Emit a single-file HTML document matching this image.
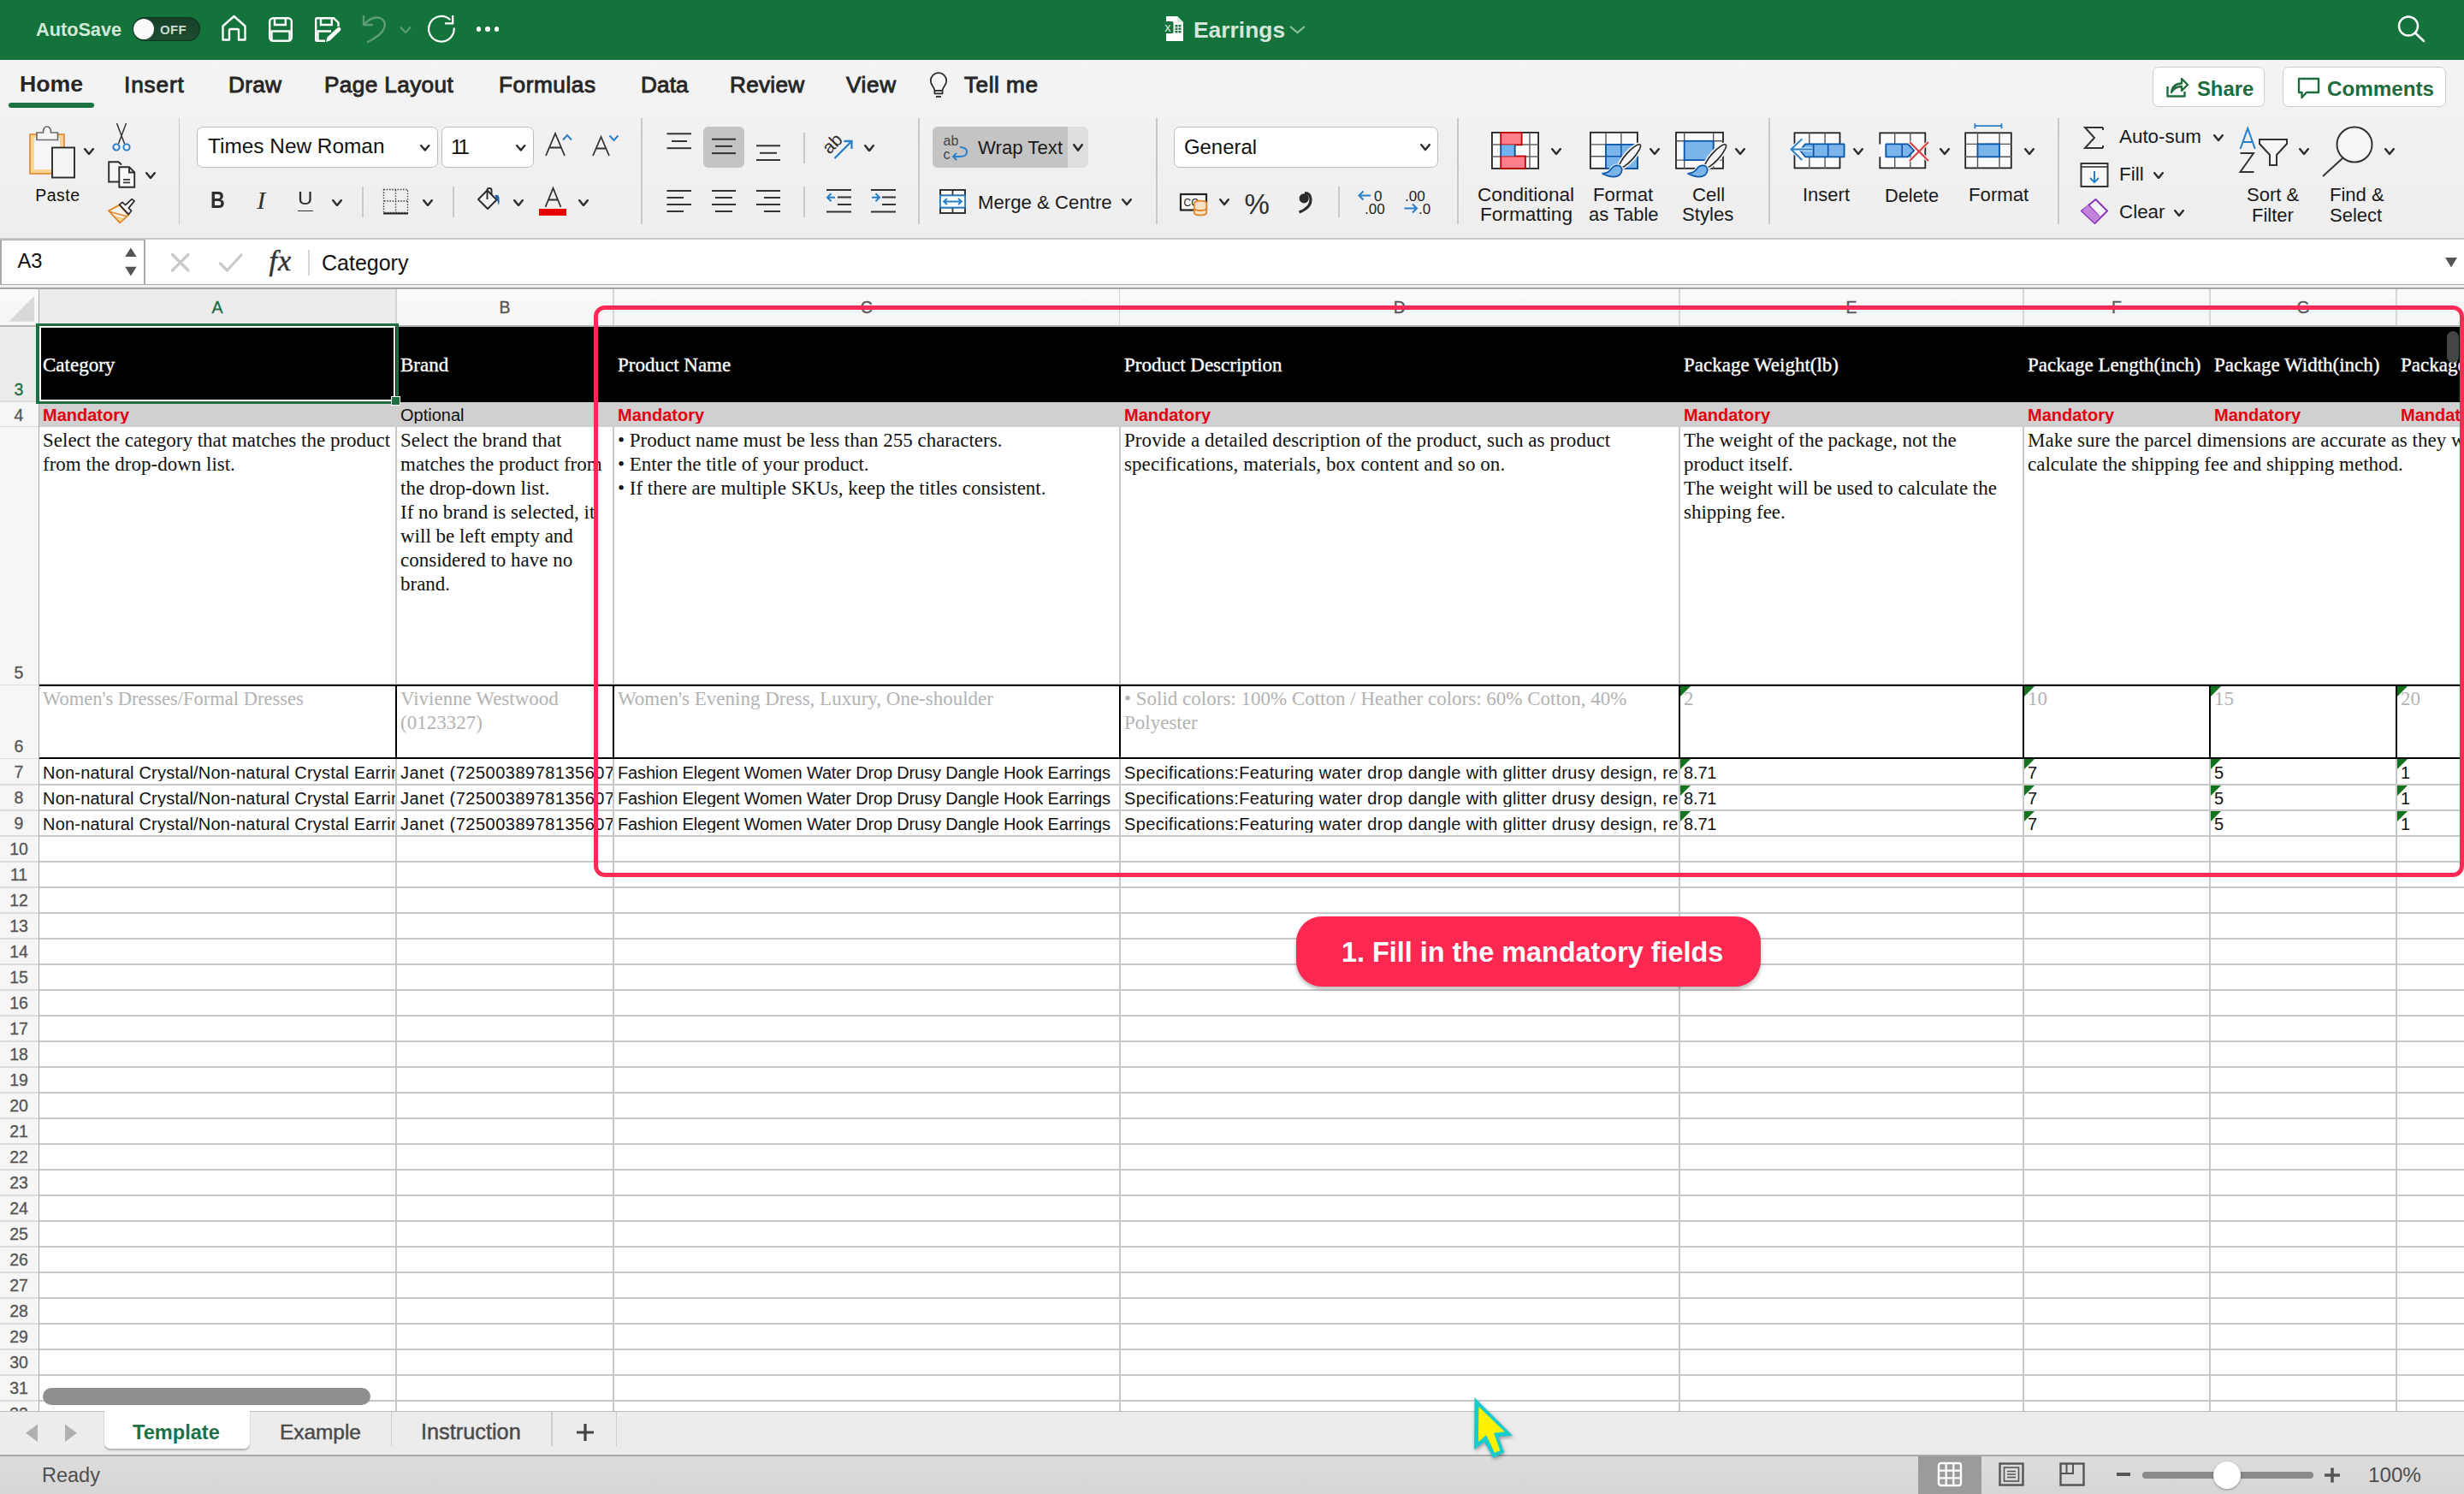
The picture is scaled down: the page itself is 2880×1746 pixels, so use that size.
<!DOCTYPE html><html><head><meta charset="utf-8"><style>
html,body{margin:0;padding:0;}
body{width:2880px;height:1746px;position:relative;overflow:hidden;background:#fff;font-family:"Liberation Sans",sans-serif;}
.t{position:absolute;white-space:pre;}
.r{position:absolute;}
</style></head><body>
<div class="r" style="left:0px;top:0px;width:2880px;height:70px;background:#13733b"></div>
<div class="t" style="left:42.0px;top:23.6px;font-size:21.7px;line-height:21.7px;color:#d3e8d8;font-weight:bold;font-family:'Liberation Sans', sans-serif;">AutoSave</div>
<div class="r" style="left:155px;top:20px;width:79px;height:28px;background:linear-gradient(#163f27,#1d4d31);border-radius:14px;box-shadow:inset 0 0 0 1px #0e3520"></div>
<div class="r" style="left:156px;top:22px;width:24px;height:24px;background:#fafafa;border-radius:50%"></div>
<div class="t" style="left:187.0px;top:27.3px;font-size:15px;line-height:15px;color:#c9dccf;font-weight:bold;font-family:'Liberation Sans', sans-serif;letter-spacing:0.3px">OFF</div>
<svg class="r" style="left:257px;top:16px;" width="34" height="34" viewBox="0 0 34 34"><path d="M3.5,30.5 V14.5 L16.5,3 L29.5,14.5 V30.5 H22 V19.5 Q22,18 20.5,18 H12.5 Q11,18 11,19.5 V30.5 Z" fill="none" stroke="#fff" stroke-width="2.4" stroke-linejoin="round"/></svg>
<svg class="r" style="left:312px;top:18px;" width="32" height="32" viewBox="0 0 32 32"><rect x="3.2" y="3.2" width="25.6" height="26.6" rx="4" fill="none" stroke="#fff" stroke-width="2.4"/><path d="M9,3.2 V11 H21.8 V3.2" fill="none" stroke="#fff" stroke-width="2.4"/><path d="M5.5,29.8 V18.5 H26.5 V29.8" fill="none" stroke="#fff" stroke-width="2.4"/></svg>
<svg class="r" style="left:366px;top:18px;" width="36" height="34" viewBox="0 0 36 34"><path d="M14,29.8 H4.5 Q3.2,29.8 3.2,28.5 V4.5 Q3.2,3.2 4.5,3.2 H24 L29.5,8.5 V13" fill="none" stroke="#fff" stroke-width="2.4" stroke-linejoin="round"/><path d="M9,3.2 V11 H21.8 V3.2" fill="none" stroke="#fff" stroke-width="2.4"/><path d="M5.5,29.8 V18.5 H21" fill="none" stroke="#fff" stroke-width="2.4"/><path d="M15,31 L16.5,25.5 L28.5,14.5 Q30.5,13 32,14.8 Q33.2,16.5 31.6,18 L19.5,29.5 Z" fill="#fff"/></svg>
<svg class="r" style="left:421px;top:15px;" width="34" height="38" viewBox="0 0 34 38"><path d="M4,4 V14 H14" fill="none" stroke="#5e9d76" stroke-width="2.3" stroke-linecap="round" stroke-linejoin="round"/><path d="M4.5,13.5 Q14,3.5 23,6 Q31,9 28,18 Q25,26 9,34" fill="none" stroke="#5e9d76" stroke-width="2.3" stroke-linecap="round"/></svg>
<svg class="r" style="left:466px;top:29px;" width="16" height="12" viewBox="0 0 16 12"><path d="M2,2.5 L8,9 L14,2.5" fill="none" stroke="#5e9d76" stroke-width="2.2"/></svg>
<svg class="r" style="left:497px;top:15px;" width="38" height="38" viewBox="0 0 38 38"><path d="M33.64,17.5 A14.8,14.8 0 1 1 29.37,8.33" fill="none" stroke="#fff" stroke-width="2.2"/><path d="M32.2,3 V12.3 H23" fill="none" stroke="#fff" stroke-width="2.3"/></svg>
<div class="r" style="left:557.1px;top:31.2px;width:5.4px;height:5.4px;background:#fff;border-radius:50%"></div>
<div class="r" style="left:567.3px;top:31.2px;width:5.4px;height:5.4px;background:#fff;border-radius:50%"></div>
<div class="r" style="left:577.5px;top:31.2px;width:5.4px;height:5.4px;background:#fff;border-radius:50%"></div>
<svg class="r" style="left:1356px;top:17px;" width="30" height="34" viewBox="0 0 30 34"><path d="M7,2 H20 L27,9 V31 H7 Z" fill="#fff"/><path d="M20,2 V9 H27" fill="#d9e8dd"/><rect x="2.5" y="8" width="13" height="14" rx="1.5" fill="#18733c"/><text x="9" y="19.5" font-family="Liberation Sans" font-size="11" fill="#fff" text-anchor="middle">X</text><g fill="#18733c"><rect x="17.5" y="12" width="3" height="2.4"/><rect x="21.5" y="12" width="3" height="2.4"/><rect x="17.5" y="15.5" width="3" height="2.4"/><rect x="21.5" y="15.5" width="3" height="2.4"/><rect x="17.5" y="19" width="3" height="2.4"/><rect x="21.5" y="19" width="3" height="2.4"/></g></svg>
<div class="t" style="left:1395.0px;top:22.1px;font-size:26.4px;line-height:26.4px;color:#d4e7da;font-weight:bold;font-family:'Liberation Sans', sans-serif;">Earrings</div>
<svg class="r" style="left:1505px;top:28px;" width="24" height="14" viewBox="0 0 24 14"><path d="M3,3 L11.5,10 L20,3" fill="none" stroke="#8dbb9c" stroke-width="2.2"/></svg>
<svg class="r" style="left:2800px;top:16px;" width="40" height="38" viewBox="0 0 40 38"><circle cx="15" cy="14.5" r="11" fill="none" stroke="#fff" stroke-width="2.4"/><path d="M23,22.5 L33,32" stroke="#fff" stroke-width="2.6" stroke-linecap="round"/></svg>
<div class="r" style="left:0px;top:70px;width:2880px;height:209px;background:linear-gradient(#f4f4f4,#f1f1f1 40%,#eeeeee)"></div>
<div class="r" style="left:0px;top:278px;width:2880px;height:2px;background:#c9c9c9"></div>
<div class="t" style="left:23.0px;top:85.4px;font-size:26.7px;line-height:26.7px;color:#262626;font-weight:bold;font-family:'Liberation Sans', sans-serif;">Home</div>
<div class="r" style="left:10px;top:120px;width:100px;height:6px;background:#1d7244;border-radius:3px"></div>
<div class="t" style="left:145.0px;top:85.8px;font-size:26.2px;line-height:26.2px;color:#262626;font-weight:normal;font-family:'Liberation Sans', sans-serif;-webkit-text-stroke:0.9px #262626;letter-spacing:0.85px">Insert</div>
<div class="t" style="left:267.0px;top:85.8px;font-size:26.2px;line-height:26.2px;color:#262626;font-weight:normal;font-family:'Liberation Sans', sans-serif;-webkit-text-stroke:0.9px #262626;letter-spacing:0.3px">Draw</div>
<div class="t" style="left:379.0px;top:85.8px;font-size:26.2px;line-height:26.2px;color:#262626;font-weight:normal;font-family:'Liberation Sans', sans-serif;-webkit-text-stroke:0.9px #262626;letter-spacing:0.37px">Page Layout</div>
<div class="t" style="left:583.0px;top:85.8px;font-size:26.2px;line-height:26.2px;color:#262626;font-weight:normal;font-family:'Liberation Sans', sans-serif;-webkit-text-stroke:0.9px #262626;letter-spacing:0.55px">Formulas</div>
<div class="t" style="left:749.0px;top:85.8px;font-size:26.2px;line-height:26.2px;color:#262626;font-weight:normal;font-family:'Liberation Sans', sans-serif;-webkit-text-stroke:0.9px #262626;letter-spacing:0.1px">Data</div>
<div class="t" style="left:853.0px;top:85.8px;font-size:26.2px;line-height:26.2px;color:#262626;font-weight:normal;font-family:'Liberation Sans', sans-serif;-webkit-text-stroke:0.9px #262626;letter-spacing:0.25px">Review</div>
<div class="t" style="left:989.0px;top:85.8px;font-size:26.2px;line-height:26.2px;color:#262626;font-weight:normal;font-family:'Liberation Sans', sans-serif;-webkit-text-stroke:0.9px #262626;letter-spacing:0.6px">View</div>
<div class="t" style="left:1127.0px;top:85.8px;font-size:26.2px;line-height:26.2px;color:#262626;font-weight:normal;font-family:'Liberation Sans', sans-serif;-webkit-text-stroke:0.9px #262626;letter-spacing:0.5px">Tell me</div>
<svg class="r" style="left:1080px;top:78px;" width="34" height="40" viewBox="0 0 34 40"><path d="M12.4,27.6 Q12.0,25.0 10.3,23.0 Q7.8,20.0 7.8,16.3 A9.2,9.2 0 1 1 26.2,16.3 Q26.2,20.0 23.7,23.0 Q22.0,25.0 21.6,27.6 V31.3 H12.4 Z M12.4,27.8 H21.6" fill="#f6f6f6" stroke="#262626" stroke-width="1.7" stroke-linejoin="round"/><path d="M14.0,35.0 H20.0" stroke="#262626" stroke-width="1.8"/></svg>
<div class="r" style="left:2516px;top:78px;width:131px;height:47px;background:#fff;border:1.5px solid #cdcdcd;border-radius:7px;box-sizing:border-box"></div>
<div class="r" style="left:2668px;top:78px;width:191px;height:47px;background:#fff;border:1.5px solid #cdcdcd;border-radius:7px;box-sizing:border-box"></div>
<svg class="r" style="left:2530px;top:88px;" width="30" height="28" viewBox="0 0 30 28"><path d="M3.5,13 V24.5 H23.5 V19" fill="none" stroke="#1f6b3d" stroke-width="2.4" stroke-linejoin="round"/><path d="M8,20 Q9,10 20,9.5 V4 L27,11 L20,18 V13 Q12,13 8,20 Z" fill="none" stroke="#1f6b3d" stroke-width="2.3" stroke-linejoin="round"/></svg>
<svg class="r" style="left:2684px;top:89px;" width="30" height="28" viewBox="0 0 30 28"><path d="M3,3 H26 V19 H12 L6.5,25 V19 H3 Z" fill="none" stroke="#1f6b3d" stroke-width="2.4" stroke-linejoin="round"/></svg>
<div class="t" style="left:2568.0px;top:91.9px;font-size:23.8px;line-height:23.8px;color:#1f6b3d;font-weight:bold;font-family:'Liberation Sans', sans-serif;">Share</div>
<div class="t" style="left:2720.0px;top:91.5px;font-size:24.2px;line-height:24.2px;color:#1f6b3d;font-weight:bold;font-family:'Liberation Sans', sans-serif;">Comments</div>
<svg class="r" style="left:30px;top:144px;" width="62" height="68" viewBox="0 0 62 68"><rect x="5" y="13" width="40" height="46" fill="#fdd592" stroke="#e0862a" stroke-width="1.6"/>
<rect x="10" y="17" width="30" height="37" fill="#f6f6f8"/>
<path d="M13,19.5 V11 H20.5 Q20.5,4 25,4 Q29.5,4 29.5,11 H37.5 V19.5 Z" fill="#f6f6f6" stroke="#6b6b6b" stroke-width="1.7"/>
<rect x="31" y="28.5" width="26" height="35" fill="#f5f5f7" stroke="#2b2b2b" stroke-width="1.9"/></svg>
<svg class="r" style="left:98px;top:172.7px;" width="12" height="8.3" viewBox="0 0 12 8.3"><path d="M1.25,1.25 L6.0,7.050000000000001 L10.75,1.25" fill="none" stroke="#2e2e2e" stroke-width="2.5" stroke-linecap="round" stroke-linejoin="round"/></svg>
<div class="t" style="left:41.2px;top:219.0px;font-size:19.5px;line-height:19.5px;color:#111;font-weight:normal;font-family:'Liberation Sans', sans-serif;letter-spacing:0.5px">Paste</div>
<svg class="r" style="left:128px;top:141px;" width="28" height="38" viewBox="0 0 28 38"><path d="M8.5,3 L17.5,27 M19.5,3 L10.5,27" stroke="#333" stroke-width="1.5"/>
<circle cx="8" cy="31" r="3.6" fill="#e8f3fc" stroke="#2178c4" stroke-width="1.9"/><circle cx="20" cy="31" r="3.6" fill="#e8f3fc" stroke="#2178c4" stroke-width="1.9"/></svg>
<svg class="r" style="left:124px;top:186px;" width="38" height="36" viewBox="0 0 38 36"><path d="M15,26.5 H3.2 V3.2 H14.5 L18,6.5" fill="#f5f5f5" stroke="#2b2b2b" stroke-width="1.9"/>
<path d="M15.3,9.2 H27 L33.2,15.5 V32.8 H15.3 Z" fill="#f8f8f8" stroke="#2b2b2b" stroke-width="1.9"/><path d="M27,9.2 V15.5 H33.2" fill="none" stroke="#2b2b2b" stroke-width="1.9"/>
<path d="M20,23.8 H28 M20,27.3 H28" stroke="#3a3a3a" stroke-width="1.7"/></svg>
<svg class="r" style="left:170.1px;top:200.9px;" width="12" height="8.3" viewBox="0 0 12 8.3"><path d="M1.25,1.25 L6.0,7.050000000000001 L10.75,1.25" fill="none" stroke="#2e2e2e" stroke-width="2.5" stroke-linecap="round" stroke-linejoin="round"/></svg>
<svg class="r" style="left:122px;top:226px;" width="40" height="40" viewBox="0 0 40 40"><polygon points="17.4,13.6 5.0,20.3 18.2,34.3 28.1,25.2" fill="#f7f3ef" stroke="#e0862a" stroke-width="1.9" stroke-linejoin="round"/><polygon points="12.6,26.2 22.8,29.0 18.5,33.2" fill="#fad27e"/><path d="M6.5,21.5 L27,27" stroke="#e0862a" stroke-width="1.8"/><polygon points="17.6,13.1 20.9,10.4 24.6,13.6 32.1,6.6 35.1,8.9 28.3,17.1 31.6,20.3 28.4,24.6" fill="#fbfbfb" stroke="#2b2b2b" stroke-width="1.7" stroke-linejoin="round"/></svg>
<div class="r" style="left:208.5px;top:138px;width:1.5px;height:124px;background:#c9c9c9"></div>
<div class="r" style="left:230px;top:148px;width:282px;height:48px;background:#fff;border:1.5px solid #bdbdbd;border-radius:7px;box-sizing:border-box"></div>
<div class="t" style="left:243.0px;top:159.3px;font-size:24.4px;line-height:24.4px;color:#111;font-weight:normal;font-family:'Liberation Sans', sans-serif;">Times New Roman</div>
<svg class="r" style="left:491px;top:169.3px;" width="11.5" height="7.8" viewBox="0 0 11.5 7.8"><path d="M1.25,1.25 L5.75,6.55 L10.25,1.25" fill="none" stroke="#2e2e2e" stroke-width="2.5" stroke-linecap="round" stroke-linejoin="round"/></svg>
<div class="r" style="left:516px;top:148px;width:108px;height:48px;background:#fff;border:1.5px solid #bdbdbd;border-radius:7px;box-sizing:border-box"></div>
<div class="t" style="left:527.0px;top:159.7px;font-size:24px;line-height:24px;color:#111;font-weight:normal;font-family:'Liberation Sans', sans-serif;letter-spacing:-3px">11</div>
<svg class="r" style="left:603px;top:169.2px;" width="11.5" height="7.8" viewBox="0 0 11.5 7.8"><path d="M1.25,1.25 L5.75,6.55 L10.25,1.25" fill="none" stroke="#2e2e2e" stroke-width="2.5" stroke-linecap="round" stroke-linejoin="round"/></svg>
<svg class="r" style="left:634px;top:152px;" width="40" height="34" viewBox="0 0 40 34"><path d="M4,30 L15,4 L26,30 M8.2,20.5 H21.8" fill="none" stroke="#333" stroke-width="1.8"/><path d="M24,11.5 L29,6 L34,11.5" fill="none" stroke="#2a7fc9" stroke-width="2"/></svg>
<svg class="r" style="left:689px;top:152px;" width="40" height="34" viewBox="0 0 40 34"><path d="M4,30 L13.5,8 L23,30 M7.8,21.5 H19.2" fill="none" stroke="#333" stroke-width="1.8"/><path d="M23.5,6.5 L28.5,12 L33.5,6.5" fill="none" stroke="#2a7fc9" stroke-width="2"/></svg>
<div class="t" style="left:246.0px;top:220.4px;font-size:28px;line-height:28px;color:#2e2e2e;font-weight:bold;font-family:'Liberation Sans', sans-serif;transform:scaleX(0.83);transform-origin:0 0">B</div>
<div class="t" style="left:300.2px;top:218.7px;font-size:30px;line-height:30px;color:#2e2e2e;font-weight:normal;font-family:'Liberation Sans', sans-serif;font-family:'Liberation Serif', serif;font-style:italic">I</div>
<div class="t" style="left:348.3px;top:221.4px;font-size:22.5px;line-height:22.5px;color:#2e2e2e;font-weight:normal;font-family:'Liberation Sans', sans-serif;transform:scaleX(1.08);transform-origin:0 0">U</div>
<div class="r" style="left:348.1px;top:245.6px;width:17.9px;height:1.9px;background:#2e2e2e"></div>
<svg class="r" style="left:388px;top:232.7px;" width="12" height="8.3" viewBox="0 0 12 8.3"><path d="M1.25,1.25 L6.0,7.050000000000001 L10.75,1.25" fill="none" stroke="#2e2e2e" stroke-width="2.5" stroke-linecap="round" stroke-linejoin="round"/></svg>
<div class="r" style="left:423px;top:218px;width:1.5px;height:36px;background:#c9c9c9"></div>
<svg class="r" style="left:446px;top:219px;" width="34" height="34" viewBox="0 0 34 34"><rect x="2.5" y="2.5" width="28" height="27" fill="none" stroke="#444" stroke-width="1.3" stroke-dasharray="1.6 1.6"/>
<path d="M16.5,3 V29 M3,16 H30" stroke="#444" stroke-width="1.3" stroke-dasharray="1.6 1.6"/><path d="M2,30.5 H31" stroke="#222" stroke-width="2"/></svg>
<svg class="r" style="left:494px;top:232.7px;" width="12" height="8.3" viewBox="0 0 12 8.3"><path d="M1.25,1.25 L6.0,7.050000000000001 L10.75,1.25" fill="none" stroke="#2e2e2e" stroke-width="2.5" stroke-linecap="round" stroke-linejoin="round"/></svg>
<div class="r" style="left:529px;top:218px;width:1.5px;height:36px;background:#c9c9c9"></div>
<svg class="r" style="left:556px;top:217px;" width="32" height="30" viewBox="0 0 32 30"><path d="M3,16 L13.5,5.5 L24.5,16.5 L14,27 Z" fill="#f6f6f6" stroke="#2b2b2b" stroke-width="1.9" stroke-linejoin="round"/>
<path d="M13.5,16 V5 Q13.5,3 16,3 Q18.5,3 18.5,5 V10" fill="none" stroke="#2b2b2b" stroke-width="1.9"/>
<path d="M22.5,11 Q27,9.5 27.5,14.5 Q28,18.5 27,23 Q26,18 23.5,14.5 Z" fill="#1f5fa8"/></svg>
<svg class="r" style="left:600px;top:232.7px;" width="12" height="8.3" viewBox="0 0 12 8.3"><path d="M1.25,1.25 L6.0,7.050000000000001 L10.75,1.25" fill="none" stroke="#2e2e2e" stroke-width="2.5" stroke-linecap="round" stroke-linejoin="round"/></svg>
<svg class="r" style="left:632px;top:217px;" width="30" height="28" viewBox="0 0 30 28"><path d="M5.5,25 L14.5,3 L23.5,25 M9,16.5 H20" fill="none" stroke="#333" stroke-width="1.8"/></svg>
<div class="r" style="left:630px;top:244px;width:32px;height:8px;background:#e60000"></div>
<svg class="r" style="left:675.8px;top:232.7px;" width="12" height="8.3" viewBox="0 0 12 8.3"><path d="M1.25,1.25 L6.0,7.050000000000001 L10.75,1.25" fill="none" stroke="#2e2e2e" stroke-width="2.5" stroke-linecap="round" stroke-linejoin="round"/></svg>
<div class="r" style="left:749px;top:138px;width:1.5px;height:124px;background:#c9c9c9"></div>
<div class="r" style="left:822px;top:148px;width:48px;height:48px;background:#c4c4c4;border-radius:6px"></div>
<svg class="r" style="left:770px;top:150px;" width="160" height="110" viewBox="0 0 160 110"><path d="M9.5,6.300000000000011 H38" stroke="#333" stroke-width="2"/><path d="M15,15 H33" stroke="#333" stroke-width="2"/><path d="M9.5,23.19999999999999 H38" stroke="#333" stroke-width="2"/></svg>
<svg class="r" style="left:770px;top:150px;" width="160" height="110" viewBox="0 0 160 110"><path d="M62,12.699999999999989 H90" stroke="#333" stroke-width="2"/><path d="M66,20.900000000000006 H86" stroke="#333" stroke-width="2"/><path d="M62,29.099999999999994 H90" stroke="#333" stroke-width="2"/></svg>
<svg class="r" style="left:770px;top:150px;" width="160" height="110" viewBox="0 0 160 110"><path d="M114,20.30000000000001 H142" stroke="#333" stroke-width="2"/><path d="M118,28.80000000000001 H138" stroke="#333" stroke-width="2"/><path d="M114,37 H142" stroke="#333" stroke-width="2"/></svg>
<svg class="r" style="left:770px;top:150px;" width="160" height="110" viewBox="0 0 160 110"><path d="M9.5,73 H38" stroke="#333" stroke-width="2"/><path d="M9.5,81 H29" stroke="#333" stroke-width="2"/><path d="M9.5,89 H38" stroke="#333" stroke-width="2"/><path d="M9.5,97 H29" stroke="#333" stroke-width="2"/></svg>
<svg class="r" style="left:770px;top:150px;" width="160" height="110" viewBox="0 0 160 110"><path d="M62,73 H90" stroke="#333" stroke-width="2"/><path d="M66,81 H86" stroke="#333" stroke-width="2"/><path d="M62,89 H90" stroke="#333" stroke-width="2"/><path d="M66,97 H86" stroke="#333" stroke-width="2"/></svg>
<svg class="r" style="left:770px;top:150px;" width="160" height="110" viewBox="0 0 160 110"><path d="M114,73 H142" stroke="#333" stroke-width="2"/><path d="M123,81 H142" stroke="#333" stroke-width="2"/><path d="M114,89 H142" stroke="#333" stroke-width="2"/><path d="M123,97 H142" stroke="#333" stroke-width="2"/></svg>
<div class="r" style="left:939px;top:155px;width:1.5px;height:36px;background:#c9c9c9"></div>
<div class="r" style="left:939px;top:218px;width:1.5px;height:36px;background:#c9c9c9"></div>
<svg class="r" style="left:958px;top:150px;" width="44" height="42" viewBox="0 0 44 42"><text x="0" y="0" transform="translate(11.5,31) rotate(-45)" font-family="Liberation Sans" font-size="21" fill="#2b2b2b">ab</text>
<path d="M17.5,35 L36.5,16 M28.5,15 H37.5 V24" fill="none" stroke="#2a7fc9" stroke-width="2.3"/></svg>
<svg class="r" style="left:1010.1px;top:168.6px;" width="12" height="8.4" viewBox="0 0 12 8.4"><path d="M1.25,1.25 L6.0,7.15 L10.75,1.25" fill="none" stroke="#2e2e2e" stroke-width="2.5" stroke-linecap="round" stroke-linejoin="round"/></svg>
<svg class="r" style="left:962px;top:218px;" width="90" height="34" viewBox="0 0 90 34"><path d="M4,4 H33 M17,12.5 H33 M17,21 H33 M4,29.5 H33" stroke="#333" stroke-width="2"/>
<path d="M14,12.8 H5 M9.5,8.3 L5,12.8 L9.5,17.3" fill="none" stroke="#2a7fc9" stroke-width="2"/>
<path d="M56,4 H85 M69,12.5 H85 M69,21 H85 M56,29.5 H85" stroke="#333" stroke-width="2"/>
<path d="M57,12.8 H66 M61.5,8.3 L66,12.8 L61.5,17.3" fill="none" stroke="#2a7fc9" stroke-width="2"/></svg>
<div class="r" style="left:1073px;top:138px;width:1.5px;height:124px;background:#c9c9c9"></div>
<div class="r" style="left:1090px;top:148px;width:182px;height:48px;background:#dedede;border-radius:6px"></div>
<div class="r" style="left:1090px;top:148px;width:158px;height:48px;background:#c4c4c4;border-radius:6px 0 0 6px"></div>
<svg class="r" style="left:1100px;top:155px;" width="36" height="36" viewBox="0 0 36 36"><text x="2.5" y="15" font-family="Liberation Sans" font-size="16" fill="#444">ab</text><text x="2.5" y="31" font-family="Liberation Sans" font-size="16" fill="#444">c</text>
<path d="M22,17 Q30,17 30,22.5 Q30,28 22,28 H14 M18,24 L14,28 L18,32" fill="none" stroke="#2a7fc9" stroke-width="2"/></svg>
<div class="t" style="left:1143.0px;top:161.9px;font-size:22.2px;line-height:22.2px;color:#1a1a1a;font-weight:normal;font-family:'Liberation Sans', sans-serif;">Wrap Text</div>
<svg class="r" style="left:1254px;top:167.8px;" width="12" height="9" viewBox="0 0 12 9"><path d="M1.25,1.25 L6.0,7.75 L10.75,1.25" fill="none" stroke="#2e2e2e" stroke-width="2.5" stroke-linecap="round" stroke-linejoin="round"/></svg>
<svg class="r" style="left:1096px;top:219px;" width="36" height="34" viewBox="0 0 36 34"><rect x="3" y="3" width="29" height="27" fill="#fff" stroke="#333" stroke-width="2"/>
<path d="M3,9.5 H32 M3,23.5 H32 M17.5,3 V9.5 M17.5,23.5 V30" stroke="#333" stroke-width="1.8"/>
<rect x="3" y="9.5" width="29" height="14" fill="#fff" stroke="#2a7fc9" stroke-width="1.8"/>
<path d="M7,16.5 H28 M11,13 L7,16.5 L11,20 M24,13 L28,16.5 L24,20" fill="none" stroke="#2a7fc9" stroke-width="1.8"/></svg>
<div class="t" style="left:1143.0px;top:225.7px;font-size:22.2px;line-height:22.2px;color:#1a1a1a;font-weight:normal;font-family:'Liberation Sans', sans-serif;">Merge &amp; Centre</div>
<svg class="r" style="left:1311px;top:232.3px;" width="12" height="8.3" viewBox="0 0 12 8.3"><path d="M1.25,1.25 L6.0,7.050000000000001 L10.75,1.25" fill="none" stroke="#2e2e2e" stroke-width="2.5" stroke-linecap="round" stroke-linejoin="round"/></svg>
<div class="r" style="left:1351px;top:138px;width:1.5px;height:124px;background:#c9c9c9"></div>
<div class="r" style="left:1372px;top:148px;width:309px;height:48px;background:#fff;border:1.5px solid #bdbdbd;border-radius:7px;box-sizing:border-box"></div>
<div class="t" style="left:1384.0px;top:159.8px;font-size:23.9px;line-height:23.9px;color:#111;font-weight:normal;font-family:'Liberation Sans', sans-serif;">General</div>
<svg class="r" style="left:1660px;top:168.3px;" width="12" height="8.3" viewBox="0 0 12 8.3"><path d="M1.25,1.25 L6.0,7.050000000000001 L10.75,1.25" fill="none" stroke="#2e2e2e" stroke-width="2.5" stroke-linecap="round" stroke-linejoin="round"/></svg>
<svg class="r" style="left:1376px;top:222px;" width="42" height="32" viewBox="0 0 42 32"><rect x="4" y="5" width="30" height="18.5" fill="#f7f7f7" stroke="#222" stroke-width="2.2"/>
<text x="7.5" y="18.5" font-family="Liberation Sans" font-size="12" fill="#222">CC</text>
<ellipse cx="27" cy="15.5" rx="7.2" ry="2.9" fill="#fbe3c8" stroke="#e0862a" stroke-width="1.8"/><path d="M19.8,15.5 V26.5 Q19.8,29.5 27,29.5 Q34.2,29.5 34.2,26.5 V15.5 M19.8,21 Q19.8,24 27,24 Q34.2,24 34.2,21" fill="#fbe3c8" stroke="#e0862a" stroke-width="1.8"/></svg>
<svg class="r" style="left:1425.3px;top:232.3px;" width="12" height="8.3" viewBox="0 0 12 8.3"><path d="M1.25,1.25 L6.0,7.050000000000001 L10.75,1.25" fill="none" stroke="#2e2e2e" stroke-width="2.5" stroke-linecap="round" stroke-linejoin="round"/></svg>
<div class="t" style="left:1454.5px;top:221.7px;font-size:33px;line-height:33px;color:#2e2e2e;font-weight:normal;font-family:'Liberation Sans', sans-serif;">%</div>
<svg class="r" style="left:1512px;top:222px;" width="24" height="30" viewBox="0 0 24 30"><path d="M13,3.5 Q20,3.5 20,11.5 Q20,21 6.5,26" fill="none" stroke="#2b2b2b" stroke-width="3.2"/><circle cx="12.2" cy="9.8" r="5.6" fill="#2b2b2b"/></svg>
<div class="r" style="left:1564px;top:218px;width:1.5px;height:36px;background:#c9c9c9"></div>
<svg class="r" style="left:1585px;top:219px;" width="40" height="34" viewBox="0 0 40 34"><path d="M17,9.5 H3.5 M8.5,4.5 L3.5,9.5 L8.5,14.5" fill="none" stroke="#2a7fc9" stroke-width="2"/>
<text x="21" y="16" font-family="Liberation Sans" font-size="17" fill="#222">0</text><text x="10" y="31" font-family="Liberation Sans" font-size="17" fill="#222">.00</text></svg>
<svg class="r" style="left:1638px;top:219px;" width="40" height="34" viewBox="0 0 40 34"><text x="4" y="16" font-family="Liberation Sans" font-size="17" fill="#222">.00</text><text x="20" y="31" font-family="Liberation Sans" font-size="17" fill="#222">.0</text>
<path d="M3.5,24.5 H18 M13,19.5 L18,24.5 L13,29.5" fill="none" stroke="#2a7fc9" stroke-width="2"/></svg>
<div class="r" style="left:1703px;top:138px;width:1.5px;height:124px;background:#c9c9c9"></div>
<svg class="r" style="left:1735px;top:145px;" width="70" height="60" viewBox="0 0 70 60"><rect x="8.9" y="9.9" width="54.2" height="42" fill="#fafafa" stroke="#222" stroke-width="1.8"/>
<path d="M9,24 H63 M9,38 H63 M53,10 V52" stroke="#666" stroke-width="1.5"/>
<rect x="19.2" y="10" width="24.4" height="14.3" fill="#ff7f8c" stroke="#c00000" stroke-width="1.8"/>
<rect x="19.2" y="37.5" width="28.7" height="14.3" fill="#ff7f8c" stroke="#c00000" stroke-width="1.8"/>
<rect x="19.2" y="24.3" width="16.5" height="13.2" fill="#72b2ee"/><path d="M19.2,24.3 V37.5 M35.7,24.3 V37.5" stroke="#0b4a8c" stroke-width="1.8"/></svg>
<svg class="r" style="left:1813.4px;top:172.6px;" width="12" height="8.3" viewBox="0 0 12 8.3"><path d="M1.25,1.25 L6.0,7.050000000000001 L10.75,1.25" fill="none" stroke="#2e2e2e" stroke-width="2.5" stroke-linecap="round" stroke-linejoin="round"/></svg>
<div class="t" style="left:1727.0px;top:216.9px;font-size:22.6px;line-height:22.6px;color:#1a1a1a;font-weight:normal;font-family:'Liberation Sans', sans-serif;">Conditional</div>
<div class="t" style="left:1730.0px;top:239.9px;font-size:22.6px;line-height:22.6px;color:#1a1a1a;font-weight:normal;font-family:'Liberation Sans', sans-serif;">Formatting</div>
<svg class="r" style="left:1850px;top:140px;" width="80" height="75" viewBox="0 0 80 75"><rect x="8.9" y="14.8" width="55" height="42" fill="#fafafa" stroke="#222" stroke-width="1.8"/>
<path d="M9,28.9 H64 M9,42.7 H64 M27,15 V57 M44.9,15 V57" stroke="#555" stroke-width="1.4"/>
<rect x="27" y="28.9" width="36.9" height="28" fill="#7ab4ea" stroke="#0a55a8" stroke-width="1.8"/><path d="M27,42.7 H64 M44.9,29 V57" stroke="#0a55a8" stroke-width="1.5"/>
<ellipse cx="55" cy="42.5" rx="18" ry="4.6" transform="rotate(-48 55 42.5)" fill="#f4f4f4" stroke="#f0f0f0" stroke-width="5"/><ellipse cx="55" cy="42.5" rx="18" ry="4.6" transform="rotate(-48 55 42.5)" fill="#f6f6f6" stroke="#2b2b2b" stroke-width="1.7"/><path d="M22.59999999999991,62.80000000000001 Q30,62.5 33.5,57 Q38,51.5 44,54.5 Q48,59 43,64.5 Q36,69.5 22.59999999999991,62.80000000000001 Z" fill="#7ab4ea" stroke="#f0f0f0" stroke-width="4"/><path d="M22.59999999999991,62.80000000000001 Q30,62.5 33.5,57 Q38,51.5 44,54.5 Q48,59 43,64.5 Q36,69.5 22.59999999999991,62.80000000000001 Z" fill="#7ab4ea" stroke="#0a55a8" stroke-width="1.6"/></svg>
<svg class="r" style="left:1928px;top:172.6px;" width="12" height="8.3" viewBox="0 0 12 8.3"><path d="M1.25,1.25 L6.0,7.050000000000001 L10.75,1.25" fill="none" stroke="#2e2e2e" stroke-width="2.5" stroke-linecap="round" stroke-linejoin="round"/></svg>
<div class="t" style="left:1862.0px;top:217.2px;font-size:22.2px;line-height:22.2px;color:#1a1a1a;font-weight:normal;font-family:'Liberation Sans', sans-serif;">Format</div>
<div class="t" style="left:1857.0px;top:240.4px;font-size:22px;line-height:22px;color:#1a1a1a;font-weight:normal;font-family:'Liberation Sans', sans-serif;">as Table</div>
<svg class="r" style="left:1950px;top:140px;" width="80" height="75" viewBox="0 0 80 75"><rect x="9" y="14.8" width="55" height="42" fill="#fafafa" stroke="#222" stroke-width="1.8"/>
<path d="M9,24.8 H64 M9,47.1 H64 M18.7,15 V57 M52.7,15 V57" stroke="#555" stroke-width="1.4"/>
<rect x="18.7" y="24.8" width="34" height="22.3" fill="#7ab4ea" stroke="#0a55a8" stroke-width="1.8"/>
<ellipse cx="55" cy="42.5" rx="18" ry="4.6" transform="rotate(-48 55 42.5)" fill="#f4f4f4" stroke="#f0f0f0" stroke-width="5"/><ellipse cx="55" cy="42.5" rx="18" ry="4.6" transform="rotate(-48 55 42.5)" fill="#f6f6f6" stroke="#2b2b2b" stroke-width="1.7"/><path d="M22.59999999999991,62.80000000000001 Q30,62.5 33.5,57 Q38,51.5 44,54.5 Q48,59 43,64.5 Q36,69.5 22.59999999999991,62.80000000000001 Z" fill="#7ab4ea" stroke="#f0f0f0" stroke-width="4"/><path d="M22.59999999999991,62.80000000000001 Q30,62.5 33.5,57 Q38,51.5 44,54.5 Q48,59 43,64.5 Q36,69.5 22.59999999999991,62.80000000000001 Z" fill="#7ab4ea" stroke="#0a55a8" stroke-width="1.6"/></svg>
<svg class="r" style="left:2028px;top:172.6px;" width="12" height="8.3" viewBox="0 0 12 8.3"><path d="M1.25,1.25 L6.0,7.050000000000001 L10.75,1.25" fill="none" stroke="#2e2e2e" stroke-width="2.5" stroke-linecap="round" stroke-linejoin="round"/></svg>
<div class="t" style="left:1978.0px;top:217.2px;font-size:22.2px;line-height:22.2px;color:#1a1a1a;font-weight:normal;font-family:'Liberation Sans', sans-serif;">Cell</div>
<div class="t" style="left:1966.0px;top:240.2px;font-size:22.2px;line-height:22.2px;color:#1a1a1a;font-weight:normal;font-family:'Liberation Sans', sans-serif;">Styles</div>
<div class="r" style="left:2067px;top:138px;width:1.5px;height:124px;background:#c9c9c9"></div>
<svg class="r" style="left:2085px;top:138px;" width="75" height="70" viewBox="0 0 75 70"><rect x="12.5" y="17.3" width="53" height="41.1" fill="#fafafa" stroke="#222" stroke-width="1.8"/>
<path d="M29.8,17.0 V59.0 M48.1,17.0 V59.0" stroke="#555" stroke-width="1.4"/>
<path d="M25.0,30.4 H70.6 V45.3 H25.0 L19.0,37.8 Z" fill="#7ab4ea" stroke="#0a55a8" stroke-width="1.8" stroke-linejoin="round"/>
<path d="M34.7,30.4 V45.3 M51.7,30.4 V45.3" stroke="#0a55a8" stroke-width="1.6"/>
<path d="M33.0,36.5 H9.0 M21.3,24.4 L8.5,36.5 L21.3,49.0" fill="none" stroke="#eef5fb" stroke-width="4.2"/>
<path d="M33.0,36.5 H9.0 M21.3,24.4 L8.5,36.5 L21.3,49.0" fill="none" stroke="#2a7fc9" stroke-width="1.9"/></svg>
<svg class="r" style="left:2166.2px;top:172.6px;" width="12" height="8.3" viewBox="0 0 12 8.3"><path d="M1.25,1.25 L6.0,7.050000000000001 L10.75,1.25" fill="none" stroke="#2e2e2e" stroke-width="2.5" stroke-linecap="round" stroke-linejoin="round"/></svg>
<div class="t" style="left:2107.0px;top:217.4px;font-size:22px;line-height:22px;color:#1a1a1a;font-weight:normal;font-family:'Liberation Sans', sans-serif;">Insert</div>
<svg class="r" style="left:2085px;top:138px;" width="180" height="70" viewBox="0 0 180 70"><path d="M112.3,30.4 V17.3 H165.3 V58.4 H112.3 V45.3" fill="#fafafa" stroke="#222" stroke-width="1.8"/>
<path d="M129.7,17.0 V59.0 M147.9,17.0 V59.0" stroke="#555" stroke-width="1.4"/>
<path d="M119.3,30.4 H145.0 L152.2,37.8 L145.0,45.3 H119.3 Z" fill="#7ab4ea" stroke="#0a55a8" stroke-width="1.8" stroke-linejoin="round"/>
<path d="M138.2,30.4 V45.3" stroke="#0a55a8" stroke-width="1.6"/>
<path d="M147.0,28.0 L169.0,50.0 M169.0,28.0 L147.0,50.0" stroke="#f6f6f6" stroke-width="4"/>
<path d="M147.0,28.0 L169.0,50.0 M169.0,28.0 L147.0,50.0" stroke="#d63a3a" stroke-width="1.9"/></svg>
<svg class="r" style="left:2266.5px;top:172.6px;" width="12" height="8.3" viewBox="0 0 12 8.3"><path d="M1.25,1.25 L6.0,7.050000000000001 L10.75,1.25" fill="none" stroke="#2e2e2e" stroke-width="2.5" stroke-linecap="round" stroke-linejoin="round"/></svg>
<div class="t" style="left:2203.0px;top:217.5px;font-size:21.8px;line-height:21.8px;color:#1a1a1a;font-weight:normal;font-family:'Liberation Sans', sans-serif;">Delete</div>
<svg class="r" style="left:2085px;top:138px;" width="280" height="70" viewBox="0 0 280 70"><path d="M223.4,6.3 V12.2 M254.5,6.3 V12.2 M223.4,9.2 H254.5" stroke="#2a7fc9" stroke-width="1.8"/>
<rect x="212.2" y="17.3" width="53.6" height="41.1" fill="#fafafa" stroke="#222" stroke-width="1.8"/>
<path d="M212.0,30.4 H266.0 M212.0,45.3 H266.0 M226.5,17.0 V59.0 M252.0,17.0 V59.0" stroke="#555" stroke-width="1.4"/>
<rect x="226.5" y="30.4" width="25.5" height="14.9" fill="#7ab4ea" stroke="#0a55a8" stroke-width="1.8"/></svg>
<svg class="r" style="left:2366px;top:172.6px;" width="12" height="8.3" viewBox="0 0 12 8.3"><path d="M1.25,1.25 L6.0,7.050000000000001 L10.75,1.25" fill="none" stroke="#2e2e2e" stroke-width="2.5" stroke-linecap="round" stroke-linejoin="round"/></svg>
<div class="t" style="left:2301.0px;top:217.2px;font-size:22.2px;line-height:22.2px;color:#1a1a1a;font-weight:normal;font-family:'Liberation Sans', sans-serif;">Format</div>
<div class="r" style="left:2405px;top:138px;width:1.5px;height:124px;background:#c9c9c9"></div>
<svg class="r" style="left:2432px;top:144px;" width="34" height="34" viewBox="0 0 34 34"><path d="M26,5 H5 L16,17 L5,29 H26 M26,5 V8 M26,29 V26" fill="none" stroke="#333" stroke-width="2"/></svg>
<div class="t" style="left:2477.0px;top:149.0px;font-size:22.4px;line-height:22.4px;color:#1a1a1a;font-weight:normal;font-family:'Liberation Sans', sans-serif;">Auto-sum</div>
<svg class="r" style="left:2587.4px;top:157.3px;" width="12" height="8.3" viewBox="0 0 12 8.3"><path d="M1.25,1.25 L6.0,7.050000000000001 L10.75,1.25" fill="none" stroke="#2e2e2e" stroke-width="2.5" stroke-linecap="round" stroke-linejoin="round"/></svg>
<svg class="r" style="left:2430px;top:188px;" width="36" height="32" viewBox="0 0 36 32"><rect x="2.5" y="3" width="31" height="27" fill="#f7f7f7" stroke="#333" stroke-width="2"/><path d="M2.5,7 H33.5" stroke="#333" stroke-width="1.6"/><path d="M18,12 V25 M13,20 L18,25 L23,20" fill="none" stroke="#2a7fc9" stroke-width="2"/></svg>
<div class="t" style="left:2477.0px;top:193.0px;font-size:22.4px;line-height:22.4px;color:#1a1a1a;font-weight:normal;font-family:'Liberation Sans', sans-serif;">Fill</div>
<svg class="r" style="left:2516.9px;top:201.1px;" width="12" height="8.3" viewBox="0 0 12 8.3"><path d="M1.25,1.25 L6.0,7.050000000000001 L10.75,1.25" fill="none" stroke="#2e2e2e" stroke-width="2.5" stroke-linecap="round" stroke-linejoin="round"/></svg>
<svg class="r" style="left:2429px;top:230px;" width="38" height="36" viewBox="0 0 38 36"><path d="M20.5,3 L34,16.5 L19.5,31 L4,16.5 Z" fill="#f6f2fa" stroke="#8a33b8" stroke-width="2" stroke-linejoin="round"/><path d="M11.5,9 L25,23.5" stroke="#8a33b8" stroke-width="2"/><path d="M4.5,16.5 L11.5,9.5 L25,23 L19.5,30.5 Z" fill="#c383dd"/></svg>
<div class="t" style="left:2477.0px;top:237.0px;font-size:22.4px;line-height:22.4px;color:#1a1a1a;font-weight:normal;font-family:'Liberation Sans', sans-serif;">Clear</div>
<svg class="r" style="left:2541.2px;top:245px;" width="12" height="8.3" viewBox="0 0 12 8.3"><path d="M1.25,1.25 L6.0,7.050000000000001 L10.75,1.25" fill="none" stroke="#2e2e2e" stroke-width="2.5" stroke-linecap="round" stroke-linejoin="round"/></svg>
<svg class="r" style="left:2612px;top:146px;" width="70" height="60" viewBox="0 0 70 60"><path d="M6.6,28 L15.2,4 L23.8,28 M9.5,20 H21" fill="none" stroke="#2a7fc9" stroke-width="2.1"/><path d="M6.5,33 H22 L6.5,55 H22.5" fill="none" stroke="#333" stroke-width="2"/>
<path d="M29,17 H61 V22 L49,35 V47 H41 V35 L29,22 Z" fill="#f6f6f6" stroke="#333" stroke-width="2" stroke-linejoin="miter"/></svg>
<svg class="r" style="left:2687.4px;top:172.9px;" width="12" height="8.3" viewBox="0 0 12 8.3"><path d="M1.25,1.25 L6.0,7.050000000000001 L10.75,1.25" fill="none" stroke="#2e2e2e" stroke-width="2.5" stroke-linecap="round" stroke-linejoin="round"/></svg>
<div class="t" style="left:2626.0px;top:216.9px;font-size:22px;line-height:22px;color:#1a1a1a;font-weight:normal;font-family:'Liberation Sans', sans-serif;">Sort &amp;</div>
<div class="t" style="left:2632.0px;top:240.9px;font-size:22px;line-height:22px;color:#1a1a1a;font-weight:normal;font-family:'Liberation Sans', sans-serif;">Filter</div>
<svg class="r" style="left:2710px;top:143px;" width="70" height="68" viewBox="0 0 70 68"><circle cx="42" cy="26" r="20.5" fill="#f6f6f6" stroke="#333" stroke-width="2"/><path d="M28.5,41.5 L5,63" stroke="#333" stroke-width="2"/></svg>
<svg class="r" style="left:2787.3px;top:172.9px;" width="12" height="8.3" viewBox="0 0 12 8.3"><path d="M1.25,1.25 L6.0,7.050000000000001 L10.75,1.25" fill="none" stroke="#2e2e2e" stroke-width="2.5" stroke-linecap="round" stroke-linejoin="round"/></svg>
<div class="t" style="left:2723.0px;top:216.9px;font-size:22px;line-height:22px;color:#1a1a1a;font-weight:normal;font-family:'Liberation Sans', sans-serif;">Find &amp;</div>
<div class="t" style="left:2723.0px;top:240.9px;font-size:22px;line-height:22px;color:#1a1a1a;font-weight:normal;font-family:'Liberation Sans', sans-serif;">Select</div>
<div class="r" style="left:0px;top:280px;width:2880px;height:52.5px;background:#fff"></div>
<div class="r" style="left:0px;top:280px;width:170px;height:52px;border:1.5px solid #a9a9a9;border-left-width:2px;border-right-width:2px;border-bottom:none;box-sizing:border-box;background:#fff"></div>
<div class="t" style="left:20.4px;top:293.7px;font-size:23.7px;line-height:23.7px;color:#111;font-weight:normal;font-family:'Liberation Sans', sans-serif;">A3</div>
<svg class="r" style="left:144px;top:287px;" width="18" height="38" viewBox="0 0 18 38"><path d="M2.2,12.9 L8.9,2.4 L15.6,12.9 Z M2.2,24.8 L15.6,24.8 L8.9,35.6 Z" fill="#555"/></svg>
<svg class="r" style="left:197px;top:293px;" width="28" height="28" viewBox="0 0 28 28"><path d="M4.5,4.5 L23,23 M23,4.5 L4.5,23" stroke="#c9c9c9" stroke-width="3.2" stroke-linecap="round"/></svg>
<svg class="r" style="left:253px;top:293px;" width="34" height="28" viewBox="0 0 34 28"><path d="M4.5,15 L12.5,23 L29,5" fill="none" stroke="#c9c9c9" stroke-width="3.2" stroke-linecap="round" stroke-linejoin="round"/></svg>
<div class="t" style="left:314.5px;top:288.0px;font-size:34px;line-height:34px;color:#333;font-weight:normal;font-family:'Liberation Serif', serif;-webkit-text-stroke:0.5px #333"><i>f</i><i style="margin-left:1px">x</i></div>
<div class="r" style="left:360.2px;top:292px;width:1.5px;height:30px;background:#d5d5d5"></div>
<div class="t" style="left:376.0px;top:294.8px;font-size:25px;line-height:25px;color:#111;font-weight:normal;font-family:'Liberation Sans', sans-serif;">Category</div>
<svg class="r" style="left:2855px;top:298px;" width="20" height="17" viewBox="0 0 20 17"><path d="M3,3 L17,3 L10,14.5 Z" fill="#555"/></svg>
<div class="r" style="left:0px;top:331.7px;width:2880px;height:1.5px;background:#a9a9a9"></div>
<div class="r" style="left:0px;top:333.2px;width:2880px;height:3px;background:#eeeeee"></div>
<div class="r" style="left:0px;top:336.2px;width:2880px;height:1.5px;background:#a4a4a4"></div>
<div class="r" style="left:0px;top:337.7px;width:2880px;height:42.5px;background:linear-gradient(#fcfcfc,#f6f6f6 45%)"></div>
<div class="r" style="left:46px;top:337.7px;width:416px;height:40.5px;background:#ececec"></div>
<svg class="r" style="left:8px;top:344px;" width="36" height="34" viewBox="0 0 36 34"><path d="M2.4,31.7 L31.9,2.2 L31.9,31.7 Z" fill="#d9d9d9"/></svg>
<div class="r" style="left:44.5px;top:337.7px;width:1.5px;height:44px;background:#aaaaaa"></div>
<div class="r" style="left:462.2px;top:337.7px;width:1.5px;height:42.5px;background:#d6d6d6"></div>
<div class="r" style="left:716.2px;top:337.7px;width:1.5px;height:42.5px;background:#d6d6d6"></div>
<div class="r" style="left:1307.7px;top:337.7px;width:1.5px;height:42.5px;background:#d6d6d6"></div>
<div class="r" style="left:1962.2px;top:337.7px;width:1.5px;height:42.5px;background:#d6d6d6"></div>
<div class="r" style="left:2364.2px;top:337.7px;width:1.5px;height:42.5px;background:#d6d6d6"></div>
<div class="r" style="left:2582.2px;top:337.7px;width:1.5px;height:42.5px;background:#d6d6d6"></div>
<div class="r" style="left:2800.2px;top:337.7px;width:1.5px;height:42.5px;background:#d6d6d6"></div>
<div class="r" style="left:0px;top:380.2px;width:2880px;height:1.7px;background:#b4b4b4"></div>
<div class="r" style="left:42.3px;top:378px;width:423.6px;height:3.6px;background:#1e6e42"></div>
<div class="t" style="left:224px;width:60px;text-align:center;top:349.5px;font-size:19.5px;line-height:19.5px;color:#1e6e42;-webkit-text-stroke:0.3px #1e6e42">A</div>
<div class="t" style="left:560px;width:60px;text-align:center;top:349.5px;font-size:19.5px;line-height:19.5px;color:#555;-webkit-text-stroke:0.3px #555">B</div>
<div class="t" style="left:982.7px;width:60px;text-align:center;top:349.5px;font-size:19.5px;line-height:19.5px;color:#555;-webkit-text-stroke:0.3px #555">C</div>
<div class="t" style="left:1605.7px;width:60px;text-align:center;top:349.5px;font-size:19.5px;line-height:19.5px;color:#555;-webkit-text-stroke:0.3px #555">D</div>
<div class="t" style="left:2134px;width:60px;text-align:center;top:349.5px;font-size:19.5px;line-height:19.5px;color:#555;-webkit-text-stroke:0.3px #555">E</div>
<div class="t" style="left:2444px;width:60px;text-align:center;top:349.5px;font-size:19.5px;line-height:19.5px;color:#555;-webkit-text-stroke:0.3px #555">F</div>
<div class="t" style="left:2662px;width:60px;text-align:center;top:349.5px;font-size:19.5px;line-height:19.5px;color:#555;-webkit-text-stroke:0.3px #555">G</div>
<div class="r" style="left:0px;top:381.9px;width:44.5px;height:1267.1px;background:#f6f6f6"></div>
<div class="r" style="left:0px;top:381.9px;width:42.3px;height:87.6px;background:#ececec"></div>
<div class="r" style="left:44.5px;top:381.9px;width:1.5px;height:1267.1px;background:#aaaaaa"></div>
<div class="r" style="left:462px;top:381.9px;width:2px;height:1267.1px;background:#c8c8c8"></div>
<div class="r" style="left:716px;top:381.9px;width:2px;height:1267.1px;background:#c8c8c8"></div>
<div class="r" style="left:1307.5px;top:381.9px;width:2px;height:1267.1px;background:#c8c8c8"></div>
<div class="r" style="left:1962px;top:381.9px;width:2px;height:1267.1px;background:#c8c8c8"></div>
<div class="r" style="left:2364px;top:381.9px;width:2px;height:1267.1px;background:#c8c8c8"></div>
<div class="r" style="left:2582px;top:381.9px;width:2px;height:1267.1px;background:#c8c8c8"></div>
<div class="r" style="left:2800px;top:381.9px;width:2px;height:1267.1px;background:#c8c8c8"></div>
<div class="r" style="left:0px;top:468.0px;width:44.5px;height:1.5px;background:#dcdcdc"></div>
<div class="r" style="left:0px;top:497.8px;width:44.5px;height:1.5px;background:#dcdcdc"></div>
<div class="r" style="left:46px;top:799px;width:2834px;height:2px;background:#c8c8c8"></div>
<div class="r" style="left:0px;top:799.5px;width:44.5px;height:1.5px;background:#dcdcdc"></div>
<div class="r" style="left:46px;top:885px;width:2834px;height:2px;background:#c8c8c8"></div>
<div class="r" style="left:0px;top:885.5px;width:44.5px;height:1.5px;background:#dcdcdc"></div>
<div class="r" style="left:46px;top:916px;width:2834px;height:2px;background:#c8c8c8"></div>
<div class="r" style="left:0px;top:916.4px;width:44.5px;height:1.5px;background:#dcdcdc"></div>
<div class="r" style="left:46px;top:946px;width:2834px;height:2px;background:#c8c8c8"></div>
<div class="r" style="left:0px;top:946.4px;width:44.5px;height:1.5px;background:#dcdcdc"></div>
<div class="r" style="left:46px;top:976px;width:2834px;height:2px;background:#c8c8c8"></div>
<div class="r" style="left:0px;top:976.4px;width:44.5px;height:1.5px;background:#dcdcdc"></div>
<div class="r" style="left:46px;top:1006px;width:2834px;height:2px;background:#c8c8c8"></div>
<div class="r" style="left:0px;top:1006.4px;width:44.5px;height:1.5px;background:#dcdcdc"></div>
<div class="r" style="left:46px;top:1036px;width:2834px;height:2px;background:#c8c8c8"></div>
<div class="r" style="left:0px;top:1036.4px;width:44.5px;height:1.5px;background:#dcdcdc"></div>
<div class="r" style="left:46px;top:1066px;width:2834px;height:2px;background:#c8c8c8"></div>
<div class="r" style="left:0px;top:1066.4px;width:44.5px;height:1.5px;background:#dcdcdc"></div>
<div class="r" style="left:46px;top:1096px;width:2834px;height:2px;background:#c8c8c8"></div>
<div class="r" style="left:0px;top:1096.4px;width:44.5px;height:1.5px;background:#dcdcdc"></div>
<div class="r" style="left:46px;top:1126px;width:2834px;height:2px;background:#c8c8c8"></div>
<div class="r" style="left:0px;top:1126.4px;width:44.5px;height:1.5px;background:#dcdcdc"></div>
<div class="r" style="left:46px;top:1156px;width:2834px;height:2px;background:#c8c8c8"></div>
<div class="r" style="left:0px;top:1156.4px;width:44.5px;height:1.5px;background:#dcdcdc"></div>
<div class="r" style="left:46px;top:1186px;width:2834px;height:2px;background:#c8c8c8"></div>
<div class="r" style="left:0px;top:1186.4px;width:44.5px;height:1.5px;background:#dcdcdc"></div>
<div class="r" style="left:46px;top:1216px;width:2834px;height:2px;background:#c8c8c8"></div>
<div class="r" style="left:0px;top:1216.4px;width:44.5px;height:1.5px;background:#dcdcdc"></div>
<div class="r" style="left:46px;top:1246px;width:2834px;height:2px;background:#c8c8c8"></div>
<div class="r" style="left:0px;top:1246.4px;width:44.5px;height:1.5px;background:#dcdcdc"></div>
<div class="r" style="left:46px;top:1276px;width:2834px;height:2px;background:#c8c8c8"></div>
<div class="r" style="left:0px;top:1276.4px;width:44.5px;height:1.5px;background:#dcdcdc"></div>
<div class="r" style="left:46px;top:1306px;width:2834px;height:2px;background:#c8c8c8"></div>
<div class="r" style="left:0px;top:1306.4px;width:44.5px;height:1.5px;background:#dcdcdc"></div>
<div class="r" style="left:46px;top:1336px;width:2834px;height:2px;background:#c8c8c8"></div>
<div class="r" style="left:0px;top:1336.4px;width:44.5px;height:1.5px;background:#dcdcdc"></div>
<div class="r" style="left:46px;top:1366px;width:2834px;height:2px;background:#c8c8c8"></div>
<div class="r" style="left:0px;top:1366.4px;width:44.5px;height:1.5px;background:#dcdcdc"></div>
<div class="r" style="left:46px;top:1396px;width:2834px;height:2px;background:#c8c8c8"></div>
<div class="r" style="left:0px;top:1396.4px;width:44.5px;height:1.5px;background:#dcdcdc"></div>
<div class="r" style="left:46px;top:1426px;width:2834px;height:2px;background:#c8c8c8"></div>
<div class="r" style="left:0px;top:1426.4px;width:44.5px;height:1.5px;background:#dcdcdc"></div>
<div class="r" style="left:46px;top:1456px;width:2834px;height:2px;background:#c8c8c8"></div>
<div class="r" style="left:0px;top:1456.4px;width:44.5px;height:1.5px;background:#dcdcdc"></div>
<div class="r" style="left:46px;top:1486px;width:2834px;height:2px;background:#c8c8c8"></div>
<div class="r" style="left:0px;top:1486.4px;width:44.5px;height:1.5px;background:#dcdcdc"></div>
<div class="r" style="left:46px;top:1516px;width:2834px;height:2px;background:#c8c8c8"></div>
<div class="r" style="left:0px;top:1516.4px;width:44.5px;height:1.5px;background:#dcdcdc"></div>
<div class="r" style="left:46px;top:1546px;width:2834px;height:2px;background:#c8c8c8"></div>
<div class="r" style="left:0px;top:1546.4px;width:44.5px;height:1.5px;background:#dcdcdc"></div>
<div class="r" style="left:46px;top:1576px;width:2834px;height:2px;background:#c8c8c8"></div>
<div class="r" style="left:0px;top:1576.4px;width:44.5px;height:1.5px;background:#dcdcdc"></div>
<div class="r" style="left:46px;top:1606px;width:2834px;height:2px;background:#c8c8c8"></div>
<div class="r" style="left:0px;top:1606.4px;width:44.5px;height:1.5px;background:#dcdcdc"></div>
<div class="r" style="left:46px;top:1636px;width:2834px;height:2px;background:#c8c8c8"></div>
<div class="r" style="left:0px;top:1636.4px;width:44.5px;height:1.5px;background:#dcdcdc"></div>
<div class="r" style="left:46px;top:1666px;width:2834px;height:2px;background:#c8c8c8"></div>
<div class="r" style="left:0px;top:1666.4px;width:44.5px;height:1.5px;background:#dcdcdc"></div>
<div class="r" style="left:46px;top:381.9px;width:2834px;height:88.3px;background:#000"></div>
<div class="r" style="left:46px;top:469.5px;width:2834px;height:29.8px;background:#d0d0d0"></div>
<div class="r" style="left:2366px;top:499.3px;width:514px;height:299.7px;background:#fff"></div>
<div class="r" style="left:46px;top:800px;width:2834px;height:2.2px;background:#000"></div>
<div class="r" style="left:46px;top:885px;width:2834px;height:2.2px;background:#000"></div>
<div class="r" style="left:462px;top:801px;width:2.2px;height:86px;background:#000"></div>
<div class="r" style="left:716px;top:801px;width:2.2px;height:86px;background:#000"></div>
<div class="r" style="left:1307.5px;top:801px;width:2.2px;height:86px;background:#000"></div>
<div class="r" style="left:1962px;top:801px;width:2.2px;height:86px;background:#000"></div>
<div class="r" style="left:2364px;top:801px;width:2.2px;height:86px;background:#000"></div>
<div class="r" style="left:2582px;top:801px;width:2.2px;height:86px;background:#000"></div>
<div class="r" style="left:2800px;top:801px;width:2.2px;height:86px;background:#000"></div>
<div class="t" style="left:0px;width:44px;text-align:center;top:445.5px;font-size:19.5px;line-height:19.5px;color:#1e6e42;-webkit-text-stroke:0.3px #1e6e42">3</div>
<div class="t" style="left:0px;width:44px;text-align:center;top:475.8px;font-size:19.5px;line-height:19.5px;color:#555;-webkit-text-stroke:0.3px #555">4</div>
<div class="t" style="left:0px;width:44px;text-align:center;top:777.0px;font-size:19.5px;line-height:19.5px;color:#555;-webkit-text-stroke:0.3px #555">5</div>
<div class="t" style="left:0px;width:44px;text-align:center;top:863.0px;font-size:19.5px;line-height:19.5px;color:#555;-webkit-text-stroke:0.3px #555">6</div>
<div class="t" style="left:0px;width:44px;text-align:center;top:893.4px;font-size:19.5px;line-height:19.5px;color:#555;-webkit-text-stroke:0.3px #555">7</div>
<div class="t" style="left:0px;width:44px;text-align:center;top:923.4px;font-size:19.5px;line-height:19.5px;color:#555;-webkit-text-stroke:0.3px #555">8</div>
<div class="t" style="left:0px;width:44px;text-align:center;top:953.4px;font-size:19.5px;line-height:19.5px;color:#555;-webkit-text-stroke:0.3px #555">9</div>
<div class="t" style="left:0px;width:44px;text-align:center;top:983.4px;font-size:19.5px;line-height:19.5px;color:#555;-webkit-text-stroke:0.3px #555">10</div>
<div class="t" style="left:0px;width:44px;text-align:center;top:1013.4px;font-size:19.5px;line-height:19.5px;color:#555;-webkit-text-stroke:0.3px #555">11</div>
<div class="t" style="left:0px;width:44px;text-align:center;top:1043.4px;font-size:19.5px;line-height:19.5px;color:#555;-webkit-text-stroke:0.3px #555">12</div>
<div class="t" style="left:0px;width:44px;text-align:center;top:1073.4px;font-size:19.5px;line-height:19.5px;color:#555;-webkit-text-stroke:0.3px #555">13</div>
<div class="t" style="left:0px;width:44px;text-align:center;top:1103.4px;font-size:19.5px;line-height:19.5px;color:#555;-webkit-text-stroke:0.3px #555">14</div>
<div class="t" style="left:0px;width:44px;text-align:center;top:1133.4px;font-size:19.5px;line-height:19.5px;color:#555;-webkit-text-stroke:0.3px #555">15</div>
<div class="t" style="left:0px;width:44px;text-align:center;top:1163.4px;font-size:19.5px;line-height:19.5px;color:#555;-webkit-text-stroke:0.3px #555">16</div>
<div class="t" style="left:0px;width:44px;text-align:center;top:1193.4px;font-size:19.5px;line-height:19.5px;color:#555;-webkit-text-stroke:0.3px #555">17</div>
<div class="t" style="left:0px;width:44px;text-align:center;top:1223.4px;font-size:19.5px;line-height:19.5px;color:#555;-webkit-text-stroke:0.3px #555">18</div>
<div class="t" style="left:0px;width:44px;text-align:center;top:1253.4px;font-size:19.5px;line-height:19.5px;color:#555;-webkit-text-stroke:0.3px #555">19</div>
<div class="t" style="left:0px;width:44px;text-align:center;top:1283.4px;font-size:19.5px;line-height:19.5px;color:#555;-webkit-text-stroke:0.3px #555">20</div>
<div class="t" style="left:0px;width:44px;text-align:center;top:1313.4px;font-size:19.5px;line-height:19.5px;color:#555;-webkit-text-stroke:0.3px #555">21</div>
<div class="t" style="left:0px;width:44px;text-align:center;top:1343.4px;font-size:19.5px;line-height:19.5px;color:#555;-webkit-text-stroke:0.3px #555">22</div>
<div class="t" style="left:0px;width:44px;text-align:center;top:1373.4px;font-size:19.5px;line-height:19.5px;color:#555;-webkit-text-stroke:0.3px #555">23</div>
<div class="t" style="left:0px;width:44px;text-align:center;top:1403.4px;font-size:19.5px;line-height:19.5px;color:#555;-webkit-text-stroke:0.3px #555">24</div>
<div class="t" style="left:0px;width:44px;text-align:center;top:1433.4px;font-size:19.5px;line-height:19.5px;color:#555;-webkit-text-stroke:0.3px #555">25</div>
<div class="t" style="left:0px;width:44px;text-align:center;top:1463.4px;font-size:19.5px;line-height:19.5px;color:#555;-webkit-text-stroke:0.3px #555">26</div>
<div class="t" style="left:0px;width:44px;text-align:center;top:1493.4px;font-size:19.5px;line-height:19.5px;color:#555;-webkit-text-stroke:0.3px #555">27</div>
<div class="t" style="left:0px;width:44px;text-align:center;top:1523.4px;font-size:19.5px;line-height:19.5px;color:#555;-webkit-text-stroke:0.3px #555">28</div>
<div class="t" style="left:0px;width:44px;text-align:center;top:1553.4px;font-size:19.5px;line-height:19.5px;color:#555;-webkit-text-stroke:0.3px #555">29</div>
<div class="t" style="left:0px;width:44px;text-align:center;top:1583.4px;font-size:19.5px;line-height:19.5px;color:#555;-webkit-text-stroke:0.3px #555">30</div>
<div class="t" style="left:0px;width:44px;text-align:center;top:1613.4px;font-size:19.5px;line-height:19.5px;color:#555;-webkit-text-stroke:0.3px #555">31</div>
<div class="t" style="left:0px;width:44px;text-align:center;top:1643.4px;font-size:19.5px;line-height:19.5px;color:#555;-webkit-text-stroke:0.3px #555">32</div>
<div class="r" style="left:42.3px;top:381.9px;width:3.6px;height:89.8px;background:#1e6e42"></div>
<div class="t" style="left:50px;top:413.0px;width:412px;overflow:hidden;font-size:23px;line-height:28px;color:#fff;font-weight:normal;font-family:'Liberation Serif', serif;-webkit-text-stroke:0.35px #fff">Category</div>
<div class="t" style="left:468px;top:413.0px;width:248px;overflow:hidden;font-size:23px;line-height:28px;color:#fff;font-weight:normal;font-family:'Liberation Serif', serif;-webkit-text-stroke:0.35px #fff">Brand</div>
<div class="t" style="left:722px;top:413.0px;width:585.5px;overflow:hidden;font-size:23px;line-height:28px;color:#fff;font-weight:normal;font-family:'Liberation Serif', serif;-webkit-text-stroke:0.35px #fff">Product Name</div>
<div class="t" style="left:1314px;top:413.0px;width:648px;overflow:hidden;font-size:23px;line-height:28px;color:#fff;font-weight:normal;font-family:'Liberation Serif', serif;-webkit-text-stroke:0.35px #fff">Product Description</div>
<div class="t" style="left:1968px;top:413.0px;width:396px;overflow:hidden;font-size:23px;line-height:28px;color:#fff;font-weight:normal;font-family:'Liberation Serif', serif;-webkit-text-stroke:0.35px #fff">Package Weight(lb)</div>
<div class="t" style="left:2370px;top:413.0px;width:212px;overflow:hidden;font-size:23px;line-height:28px;color:#fff;font-weight:normal;font-family:'Liberation Serif', serif;-webkit-text-stroke:0.35px #fff">Package Length(inch)</div>
<div class="t" style="left:2588px;top:413.0px;width:212px;overflow:hidden;font-size:23px;line-height:28px;color:#fff;font-weight:normal;font-family:'Liberation Serif', serif;-webkit-text-stroke:0.35px #fff">Package Width(inch)</div>
<div class="t" style="left:2806px;top:413.0px;width:74px;overflow:hidden;font-size:23px;line-height:28px;color:#fff;font-weight:normal;font-family:'Liberation Serif', serif;-webkit-text-stroke:0.35px #fff">Package Height(inch)</div>
<div class="t" style="left:50px;top:475.3px;width:412px;overflow:hidden;font-size:20px;line-height:20px;color:#e3000f;font-weight:bold;font-family:'Liberation Sans', sans-serif;">Mandatory</div>
<div class="t" style="left:722px;top:475.3px;width:585.5px;overflow:hidden;font-size:20px;line-height:20px;color:#e3000f;font-weight:bold;font-family:'Liberation Sans', sans-serif;">Mandatory</div>
<div class="t" style="left:1314px;top:475.3px;width:648px;overflow:hidden;font-size:20px;line-height:20px;color:#e3000f;font-weight:bold;font-family:'Liberation Sans', sans-serif;">Mandatory</div>
<div class="t" style="left:1968px;top:475.3px;width:396px;overflow:hidden;font-size:20px;line-height:20px;color:#e3000f;font-weight:bold;font-family:'Liberation Sans', sans-serif;">Mandatory</div>
<div class="t" style="left:2370px;top:475.3px;width:212px;overflow:hidden;font-size:20px;line-height:20px;color:#e3000f;font-weight:bold;font-family:'Liberation Sans', sans-serif;">Mandatory</div>
<div class="t" style="left:2588px;top:475.3px;width:212px;overflow:hidden;font-size:20px;line-height:20px;color:#e3000f;font-weight:bold;font-family:'Liberation Sans', sans-serif;">Mandatory</div>
<div class="t" style="left:2806px;top:475.3px;width:74px;overflow:hidden;font-size:20px;line-height:20px;color:#e3000f;font-weight:bold;font-family:'Liberation Sans', sans-serif;">Mandatory</div>
<div class="t" style="left:468px;top:475.3px;width:248px;overflow:hidden;font-size:20px;line-height:20px;color:#111;font-weight:normal;font-family:'Liberation Sans', sans-serif;">Optional</div>
<div class="t" style="left:50px;top:500.7px;width:412px;overflow:hidden;font-size:23px;line-height:28px;color:#111;font-weight:normal;font-family:'Liberation Serif', serif;">Select the category that matches the product<br>from the drop-down list.</div>
<div class="t" style="left:468px;top:500.7px;width:248px;overflow:hidden;font-size:23px;line-height:28px;color:#111;font-weight:normal;font-family:'Liberation Serif', serif;">Select the brand that<br>matches the product from<br>the drop-down list.<br>If no brand is selected, it<br>will be left empty and<br>considered to have no<br>brand.</div>
<div class="t" style="left:722px;top:500.7px;width:585px;overflow:hidden;font-size:23px;line-height:28px;color:#111;font-weight:normal;font-family:'Liberation Serif', serif;">• Product name must be less than 255 characters.<br>• Enter the title of your product.<br>• If there are multiple SKUs, keep the titles consistent.</div>
<div class="t" style="left:1314px;top:500.7px;width:648px;overflow:hidden;font-size:23px;line-height:28px;color:#111;font-weight:normal;font-family:'Liberation Serif', serif;letter-spacing:0.08px">Provide a detailed description of the product, such as product<br>specifications, materials, box content and so on.</div>
<div class="t" style="left:1968px;top:500.7px;width:396px;overflow:hidden;font-size:23px;line-height:28px;color:#111;font-weight:normal;font-family:'Liberation Serif', serif;">The weight of the package, not the<br>product itself.<br>The weight will be used to calculate the<br>shipping fee.</div>
<div class="t" style="left:2370px;top:500.7px;width:510px;overflow:hidden;font-size:23px;line-height:28px;color:#111;font-weight:normal;font-family:'Liberation Serif', serif;">Make sure the parcel dimensions are accurate as they will be used to<br>calculate the shipping fee and shipping method.</div>
<div class="t" style="left:50px;top:803.4px;width:412px;overflow:hidden;font-size:22.5px;line-height:28px;color:#b3b3b3;font-weight:normal;font-family:'Liberation Serif', serif;">Women's Dresses/Formal Dresses</div>
<div class="t" style="left:468px;top:803.2px;width:248px;overflow:hidden;font-size:23px;line-height:28px;color:#b3b3b3;font-weight:normal;font-family:'Liberation Serif', serif;">Vivienne Westwood<br>(0123327)</div>
<div class="t" style="left:722px;top:803.2px;width:585px;overflow:hidden;font-size:23px;line-height:28px;color:#b3b3b3;font-weight:normal;font-family:'Liberation Serif', serif;">Women's Evening Dress, Luxury, One-shoulder</div>
<div class="t" style="left:1314px;top:803.2px;width:648px;overflow:hidden;font-size:23px;line-height:28px;color:#b3b3b3;font-weight:normal;font-family:'Liberation Serif', serif;">• Solid colors: 100% Cotton / Heather colors: 60% Cotton, 40%<br>Polyester</div>
<div class="t" style="left:1968px;top:803.2px;width:396px;overflow:hidden;font-size:23px;line-height:28px;color:#b3b3b3;font-weight:normal;font-family:'Liberation Serif', serif;">2</div>
<div class="t" style="left:2370px;top:803.2px;width:212px;overflow:hidden;font-size:23px;line-height:28px;color:#b3b3b3;font-weight:normal;font-family:'Liberation Serif', serif;">10</div>
<div class="t" style="left:2588px;top:803.2px;width:212px;overflow:hidden;font-size:23px;line-height:28px;color:#b3b3b3;font-weight:normal;font-family:'Liberation Serif', serif;">15</div>
<div class="t" style="left:2806px;top:803.2px;width:74px;overflow:hidden;font-size:23px;line-height:28px;color:#b3b3b3;font-weight:normal;font-family:'Liberation Serif', serif;">20</div>
<div class="t" style="left:50px;top:893.0px;width:412px;overflow:hidden;font-size:20px;line-height:20px;color:#111;font-weight:normal;font-family:'Liberation Sans', sans-serif;letter-spacing:0.2px">Non-natural Crystal/Non-natural Crystal Earrings</div>
<div class="t" style="left:468px;top:893.0px;width:248px;overflow:hidden;font-size:20px;line-height:20px;color:#111;font-weight:normal;font-family:'Liberation Sans', sans-serif;letter-spacing:0.5px">Janet (7250038978135607488)</div>
<div class="t" style="left:722px;top:893.0px;width:585px;overflow:hidden;font-size:20px;line-height:20px;color:#111;font-weight:normal;font-family:'Liberation Sans', sans-serif;letter-spacing:-0.15px">Fashion Elegent Women Water Drop Drusy Dangle Hook Earrings</div>
<div class="t" style="left:1314px;top:893.0px;width:648px;overflow:hidden;font-size:20px;line-height:20px;color:#111;font-weight:normal;font-family:'Liberation Sans', sans-serif;letter-spacing:0.35px">Specifications:Featuring water drop dangle with glitter drusy design, realistic</div>
<div class="t" style="left:1968px;top:893.0px;width:396px;overflow:hidden;font-size:20px;line-height:20px;color:#111;font-weight:normal;font-family:'Liberation Sans', sans-serif;letter-spacing:-0.15px">8.71</div>
<div class="t" style="left:2370px;top:893.0px;width:212px;overflow:hidden;font-size:20px;line-height:20px;color:#111;font-weight:normal;font-family:'Liberation Sans', sans-serif;letter-spacing:-0.15px">7</div>
<div class="t" style="left:2588px;top:893.0px;width:212px;overflow:hidden;font-size:20px;line-height:20px;color:#111;font-weight:normal;font-family:'Liberation Sans', sans-serif;letter-spacing:-0.15px">5</div>
<div class="t" style="left:2806px;top:893.0px;width:74px;overflow:hidden;font-size:20px;line-height:20px;color:#111;font-weight:normal;font-family:'Liberation Sans', sans-serif;letter-spacing:-0.15px">1</div>
<div class="t" style="left:50px;top:923.0px;width:412px;overflow:hidden;font-size:20px;line-height:20px;color:#111;font-weight:normal;font-family:'Liberation Sans', sans-serif;letter-spacing:0.2px">Non-natural Crystal/Non-natural Crystal Earrings</div>
<div class="t" style="left:468px;top:923.0px;width:248px;overflow:hidden;font-size:20px;line-height:20px;color:#111;font-weight:normal;font-family:'Liberation Sans', sans-serif;letter-spacing:0.5px">Janet (7250038978135607488)</div>
<div class="t" style="left:722px;top:923.0px;width:585px;overflow:hidden;font-size:20px;line-height:20px;color:#111;font-weight:normal;font-family:'Liberation Sans', sans-serif;letter-spacing:-0.15px">Fashion Elegent Women Water Drop Drusy Dangle Hook Earrings</div>
<div class="t" style="left:1314px;top:923.0px;width:648px;overflow:hidden;font-size:20px;line-height:20px;color:#111;font-weight:normal;font-family:'Liberation Sans', sans-serif;letter-spacing:0.35px">Specifications:Featuring water drop dangle with glitter drusy design, realistic</div>
<div class="t" style="left:1968px;top:923.0px;width:396px;overflow:hidden;font-size:20px;line-height:20px;color:#111;font-weight:normal;font-family:'Liberation Sans', sans-serif;letter-spacing:-0.15px">8.71</div>
<div class="t" style="left:2370px;top:923.0px;width:212px;overflow:hidden;font-size:20px;line-height:20px;color:#111;font-weight:normal;font-family:'Liberation Sans', sans-serif;letter-spacing:-0.15px">7</div>
<div class="t" style="left:2588px;top:923.0px;width:212px;overflow:hidden;font-size:20px;line-height:20px;color:#111;font-weight:normal;font-family:'Liberation Sans', sans-serif;letter-spacing:-0.15px">5</div>
<div class="t" style="left:2806px;top:923.0px;width:74px;overflow:hidden;font-size:20px;line-height:20px;color:#111;font-weight:normal;font-family:'Liberation Sans', sans-serif;letter-spacing:-0.15px">1</div>
<div class="t" style="left:50px;top:953.0px;width:412px;overflow:hidden;font-size:20px;line-height:20px;color:#111;font-weight:normal;font-family:'Liberation Sans', sans-serif;letter-spacing:0.2px">Non-natural Crystal/Non-natural Crystal Earrings</div>
<div class="t" style="left:468px;top:953.0px;width:248px;overflow:hidden;font-size:20px;line-height:20px;color:#111;font-weight:normal;font-family:'Liberation Sans', sans-serif;letter-spacing:0.5px">Janet (7250038978135607488)</div>
<div class="t" style="left:722px;top:953.0px;width:585px;overflow:hidden;font-size:20px;line-height:20px;color:#111;font-weight:normal;font-family:'Liberation Sans', sans-serif;letter-spacing:-0.15px">Fashion Elegent Women Water Drop Drusy Dangle Hook Earrings</div>
<div class="t" style="left:1314px;top:953.0px;width:648px;overflow:hidden;font-size:20px;line-height:20px;color:#111;font-weight:normal;font-family:'Liberation Sans', sans-serif;letter-spacing:0.35px">Specifications:Featuring water drop dangle with glitter drusy design, realistic</div>
<div class="t" style="left:1968px;top:953.0px;width:396px;overflow:hidden;font-size:20px;line-height:20px;color:#111;font-weight:normal;font-family:'Liberation Sans', sans-serif;letter-spacing:-0.15px">8.71</div>
<div class="t" style="left:2370px;top:953.0px;width:212px;overflow:hidden;font-size:20px;line-height:20px;color:#111;font-weight:normal;font-family:'Liberation Sans', sans-serif;letter-spacing:-0.15px">7</div>
<div class="t" style="left:2588px;top:953.0px;width:212px;overflow:hidden;font-size:20px;line-height:20px;color:#111;font-weight:normal;font-family:'Liberation Sans', sans-serif;letter-spacing:-0.15px">5</div>
<div class="t" style="left:2806px;top:953.0px;width:74px;overflow:hidden;font-size:20px;line-height:20px;color:#111;font-weight:normal;font-family:'Liberation Sans', sans-serif;letter-spacing:-0.15px">1</div>
<svg class="r" style="left:1964px;top:802.2px;" width="13" height="13" viewBox="0 0 13 13"><path d="M0,0 H12 L0,12 Z" fill="#13731f"/></svg>
<svg class="r" style="left:2366px;top:802.2px;" width="13" height="13" viewBox="0 0 13 13"><path d="M0,0 H12 L0,12 Z" fill="#13731f"/></svg>
<svg class="r" style="left:2584px;top:802.2px;" width="13" height="13" viewBox="0 0 13 13"><path d="M0,0 H12 L0,12 Z" fill="#13731f"/></svg>
<svg class="r" style="left:2802px;top:802.2px;" width="13" height="13" viewBox="0 0 13 13"><path d="M0,0 H12 L0,12 Z" fill="#13731f"/></svg>
<svg class="r" style="left:1964px;top:887px;" width="13" height="13" viewBox="0 0 13 13"><path d="M0,0 H12 L0,12 Z" fill="#13731f"/></svg>
<svg class="r" style="left:2366px;top:887px;" width="13" height="13" viewBox="0 0 13 13"><path d="M0,0 H12 L0,12 Z" fill="#13731f"/></svg>
<svg class="r" style="left:2584px;top:887px;" width="13" height="13" viewBox="0 0 13 13"><path d="M0,0 H12 L0,12 Z" fill="#13731f"/></svg>
<svg class="r" style="left:2802px;top:887px;" width="13" height="13" viewBox="0 0 13 13"><path d="M0,0 H12 L0,12 Z" fill="#13731f"/></svg>
<svg class="r" style="left:1964px;top:917.9px;" width="13" height="13" viewBox="0 0 13 13"><path d="M0,0 H12 L0,12 Z" fill="#13731f"/></svg>
<svg class="r" style="left:2366px;top:917.9px;" width="13" height="13" viewBox="0 0 13 13"><path d="M0,0 H12 L0,12 Z" fill="#13731f"/></svg>
<svg class="r" style="left:2584px;top:917.9px;" width="13" height="13" viewBox="0 0 13 13"><path d="M0,0 H12 L0,12 Z" fill="#13731f"/></svg>
<svg class="r" style="left:2802px;top:917.9px;" width="13" height="13" viewBox="0 0 13 13"><path d="M0,0 H12 L0,12 Z" fill="#13731f"/></svg>
<svg class="r" style="left:1964px;top:947.9px;" width="13" height="13" viewBox="0 0 13 13"><path d="M0,0 H12 L0,12 Z" fill="#13731f"/></svg>
<svg class="r" style="left:2366px;top:947.9px;" width="13" height="13" viewBox="0 0 13 13"><path d="M0,0 H12 L0,12 Z" fill="#13731f"/></svg>
<svg class="r" style="left:2584px;top:947.9px;" width="13" height="13" viewBox="0 0 13 13"><path d="M0,0 H12 L0,12 Z" fill="#13731f"/></svg>
<svg class="r" style="left:2802px;top:947.9px;" width="13" height="13" viewBox="0 0 13 13"><path d="M0,0 H12 L0,12 Z" fill="#13731f"/></svg>
<div class="r" style="left:42.3px;top:378px;width:423.6px;height:93.7px;border:3.6px solid #1e6e42;box-sizing:border-box"></div>
<div class="r" style="left:45.7px;top:381.4px;width:416.8px;height:87.2px;border:2.2px solid #fff;box-sizing:border-box"></div>
<div class="r" style="left:456.5px;top:462.5px;width:11.5px;height:11px;background:#1e6e42;border:1.5px solid #fff;box-sizing:border-box"></div>
<div class="r" style="left:2860px;top:387px;width:14px;height:37px;background:#454545;border-radius:7px"></div>
<div class="r" style="left:50px;top:1621.7px;width:383px;height:20px;background:#8f8f8f;border-radius:10px"></div>
<div class="r" style="left:0px;top:1648.5px;width:2880px;height:52.5px;background:#ececec"></div>
<div class="r" style="left:0px;top:1648.5px;width:2880px;height:1.5px;background:#bdbdbd"></div>
<div class="r" style="left:122px;top:1648.5px;width:170px;height:44.5px;background:#fff;border-radius:0 0 7px 7px;box-shadow:0 1.5px 2px rgba(0,0,0,0.25)"></div>
<svg class="r" style="left:27px;top:1662px;" width="20" height="26" viewBox="0 0 20 26"><path d="M17,2.5 L17,23 L3,12.8 Z" fill="#b0b0b0"/></svg>
<svg class="r" style="left:73px;top:1662px;" width="20" height="26" viewBox="0 0 20 26"><path d="M3,2.5 L3,23 L17,12.8 Z" fill="#b0b0b0"/></svg>
<div class="t" style="left:155.0px;top:1662.5px;font-size:23.6px;line-height:23.6px;color:#1e7145;font-weight:bold;font-family:'Liberation Sans', sans-serif;">Template</div>
<div class="t" style="left:327.0px;top:1661.8px;font-size:24.4px;line-height:24.4px;color:#4a4a4a;font-weight:normal;font-family:'Liberation Sans', sans-serif;-webkit-text-stroke:0.45px #4a4a4a">Example</div>
<div class="r" style="left:456.5px;top:1650px;width:1.5px;height:40px;background:#cfcfcf"></div>
<div class="t" style="left:492.0px;top:1661.1px;font-size:25.3px;line-height:25.3px;color:#4a4a4a;font-weight:normal;font-family:'Liberation Sans', sans-serif;-webkit-text-stroke:0.45px #4a4a4a">Instruction</div>
<div class="r" style="left:644px;top:1650px;width:1.5px;height:40px;background:#cfcfcf"></div>
<svg class="r" style="left:672px;top:1662px;" width="24" height="24" viewBox="0 0 24 24"><path d="M12,2 V22 M2,12 H22" stroke="#444" stroke-width="3.2"/></svg>
<div class="r" style="left:719.5px;top:1650px;width:1.5px;height:40px;background:#cfcfcf"></div>
<div class="r" style="left:0px;top:1700.5px;width:2880px;height:45.5px;background:linear-gradient(#dddddd,#d6d6d6)"></div>
<div class="r" style="left:0px;top:1700px;width:2880px;height:1.5px;background:#a9a9a9"></div>
<div class="t" style="left:49.0px;top:1712.6px;font-size:23.5px;line-height:23.5px;color:#4f4f4f;font-weight:normal;font-family:'Liberation Sans', sans-serif;">Ready</div>
<div class="r" style="left:2242px;top:1701.5px;width:74px;height:44.5px;background:#9b9b9b"></div>
<svg class="r" style="left:2264px;top:1708px;" width="30" height="30" viewBox="0 0 30 30"><rect x="2" y="2" width="26" height="26" rx="2.5" fill="none" stroke="#fff" stroke-width="2.4"/><path d="M2,10.7 H28 M2,19.3 H28 M10.7,2 V28 M19.3,2 V28" stroke="#fff" stroke-width="2.2"/></svg>
<svg class="r" style="left:2335px;top:1708px;" width="32" height="30" viewBox="0 0 32 30"><rect x="2.5" y="2.5" width="27" height="25" fill="none" stroke="#555" stroke-width="2.4"/><rect x="7.5" y="7" width="17" height="16" fill="none" stroke="#555" stroke-width="1.6"/><path d="M11,11.5 H21 M11,15 H21 M11,18.5 H21" stroke="#555" stroke-width="1.5"/></svg>
<svg class="r" style="left:2406px;top:1708px;" width="32" height="30" viewBox="0 0 32 30"><rect x="2.5" y="2.5" width="27" height="25" fill="none" stroke="#555" stroke-width="2.4"/><path d="M2.5,14 H17 V2.5 M9.5,2.5 V14" fill="none" stroke="#555" stroke-width="2"/></svg>
<div class="r" style="left:2474px;top:1721.3px;width:16px;height:4px;background:#555"></div>
<div class="r" style="left:2503.5px;top:1719.6px;width:200px;height:8px;background:#8a8a8a;border-radius:4px"></div>
<div class="r" style="left:2587.4px;top:1707.6px;width:32px;height:32px;background:#fff;border-radius:50%;box-shadow:0 1px 3px rgba(0,0,0,0.35)"></div>
<svg class="r" style="left:2715px;top:1714px;" width="22" height="20" viewBox="0 0 22 20"><path d="M11,1.5 V18.5 M2,10 H20" stroke="#555" stroke-width="3.6"/></svg>
<div class="t" style="left:2768.0px;top:1711.5px;font-size:24.2px;line-height:24.2px;color:#4d4d4d;font-weight:normal;font-family:'Liberation Sans', sans-serif;">100%</div>
<div class="r" style="left:694px;top:357px;width:2186px;height:668px;border:5px solid #fd2a55;border-radius:13px;box-sizing:border-box"></div>
<div class="r" style="left:1515px;top:1071px;width:543px;height:82px;background:#fd2852;border-radius:30px;box-shadow:0 3px 4px rgba(0,0,0,0.28)"></div>
<div class="t" style="left:1568.0px;top:1097.0px;font-size:32.4px;line-height:32.4px;color:#fff;font-weight:bold;font-family:'Liberation Sans', sans-serif;">1. Fill in the mandatory fields</div>
<svg class="r" style="left:1710px;top:1620px;" width="70" height="95" viewBox="0 0 70 95"><polygon points="13.5,13.2 13.0,74.3 24.8,65.0 35.5,84.0 48.2,77.2 41.4,59.0 58.0,57.7" fill="#17cccc" style="filter:drop-shadow(1px 2px 2px rgba(0,0,0,0.35))"/><polygon points="18.4,24.0 17.9,65.0 27.2,57.2 37.0,77.7 43.3,75.3 36.0,54.7 48.7,53.3" fill="#fff200"/></svg>
</body></html>
